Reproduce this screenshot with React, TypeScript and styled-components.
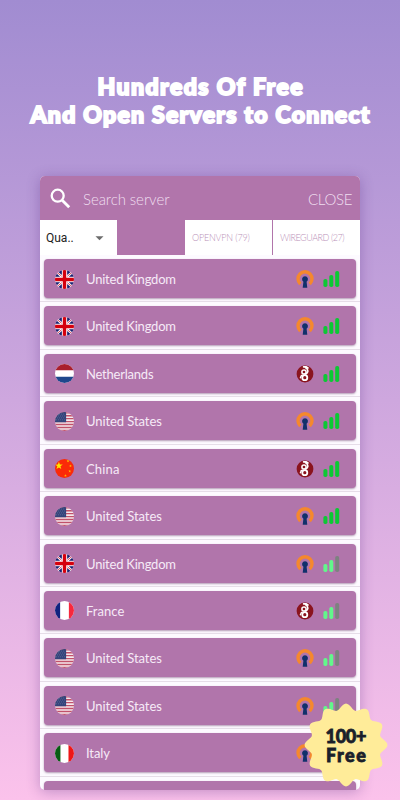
import React from "react";
import styled, { createGlobalStyle } from "styled-components";

const GlobalStyle = createGlobalStyle`
  * { box-sizing: border-box; }
  html, body { margin: 0; padding: 0; }
  body { width: 400px; height: 800px; overflow: hidden; }
  svg { display: block; flex: none; }
`;

const Page = styled.main`
  position: relative;
  width: 400px;
  height: 800px;
  overflow: hidden;
  padding: 72px 40px 0;
  background: linear-gradient(180deg, #a18cd1 0%, #fbc2eb 100%);
  font-family: Lato, sans-serif;
`;

const Heading = styled.h1`
  display: flex;
  flex-direction: column;
  align-items: center;
  height: 104px;
  margin: 0 -40px;
  color: #fff;
  font: 900 23px/28px Lato, sans-serif;
  -webkit-text-stroke: 2px #fff;
  paint-order: stroke fill;
  white-space: nowrap;
`;

const HeadingLine = styled.span<{ $spacing: number }>`
  letter-spacing: ${(p) => p.$spacing}px;
  margin-right: ${(p) => -p.$spacing}px;
`;

const Panel = styled.section`
  height: 614px;
  border-radius: 5px;
  overflow: hidden;
  background: #fdfaff;
  box-shadow: 0 2px 14px rgba(75, 35, 120, 0.32);
`;

const SearchBar = styled.header`
  display: flex;
  align-items: center;
  height: 44px;
  padding: 1px 8px 0 10px;
  background: #b175ab;
  color: #f0dff0;
`;

const Placeholder = styled.span`
  flex: 1;
  margin-left: 12px;
  font: 300 15px/20px Lato, sans-serif;
  letter-spacing: -0.07px;
`;

const Close = styled.span`
  font: 300 15px/20px Lato, sans-serif;
  letter-spacing: -0.35px;
`;

const Tabs = styled.nav`
  display: grid;
  grid-template-columns: 77px 68px 87px 1px 87px;
  height: 35px;
  background: #b175ab;
`;

const SortSelect = styled.div`
  display: flex;
  align-items: center;
  justify-content: space-between;
  padding: 1px 13px 0 6px;
  background: #fff;
  color: #222;
  font: 400 12px/16px Roboto, sans-serif;
`;

const Tab = styled.div<{ $spacing: number }>`
  padding: 10px 0 0 7px;
  background: #fff;
  color: #b98fb7;
  font: 300 9px/16px Lato, sans-serif;
  letter-spacing: ${(p) => p.$spacing}px;
  white-space: nowrap;
`;

const List = styled.div`
  display: flex;
  flex-direction: column;
`;

const Slot = styled.div`
  flex: none;
  height: 47.43px;
  padding: 4px 4px 0;
  border-bottom: 1px solid #e6dde8;
`;

const ServerRow = styled.div`
  display: flex;
  align-items: center;
  height: 39px;
  padding: 1px 16px 0 11px;
  border-radius: 4px;
  background: #b175ab;
  box-shadow: 0 1px 2px rgba(90, 40, 90, 0.45);
`;

const Country = styled.span<{ $spacing: number }>`
  flex: 1;
  margin-left: 12px;
  color: #f6eaf7;
  font: 400 13px/18px Lato, sans-serif;
  letter-spacing: ${(p) => p.$spacing}px;
`;

const SignalBox = styled.span`
  margin-left: 9px;
`;

const BadgeBox = styled.aside`
  position: absolute;
  left: 304px;
  top: 703px;
  width: 84px;
  height: 84px;
  display: grid;
  place-items: center;
`;

const BadgeShape = styled.svg`
  grid-area: 1 / 1;
`;

const BadgeText = styled.div`
  grid-area: 1 / 1;
  position: relative;
  display: flex;
  flex-direction: column;
  align-items: center;
  padding-top: 2px;
  color: #1b1f2a;
  font: 900 18px/19px Lato, sans-serif;
  -webkit-text-stroke: 0.8px #1b1f2a;
`;

const BadgeLine = styled.span<{ $spacing: number }>`
  letter-spacing: ${(p) => p.$spacing}px;
  margin-right: ${(p) => -p.$spacing}px;
`;

type FlagCode = "gb" | "nl" | "us" | "cn" | "fr" | "it";

const STAR = "M0-1 .24-.31 .95-.31 .38.12 .59.81 0 .4-.59.81-.38.12-.95-.31-.24-.31Z";

const flagArt: Record<FlagCode, React.ReactNode> = {
  gb: (
    <>
      <path fill="#fafaff" d="M0 0h20v20H0z" />
      <path fill="#17206f" d="M3 1.6 7.2 5.2V0H3zM17 1.6 12.8 5.2V0H17zM3 18.4l4.2-3.6V20H3zM17 18.4l-4.2-3.6V20H17zM0 3.8v3.4h5.4L1.6 3.8zM20 3.8v3.4h-5.4l3.8-3.4zM0 16.2v-3.4h5.4l-3.8 3.4zM20 16.2v-3.4h-5.4l3.8 3.4z" />
      <path stroke="#d42a3a" strokeWidth=".9" d="M2 2.4 7 6.6M18 2.4 13 6.6M2 17.6 7 13.4M18 17.6 13 13.4" />
      <path fill="#d5000d" d="M8.2 0h3.6v8.2H20v3.6h-8.2V20H8.2v-8.2H0V8.2h8.2z" />
    </>
  ),
  nl: (
    <>
      <path fill="#fff" d="M0 0h20v20H0z" />
      <path fill="#a91f2d" d="M0 0h20v6.6H0z" />
      <path fill="#1e478c" d="M0 13.3h20V20H0z" />
    </>
  ),
  us: (
    <>
      <path fill="#f5e9ee" d="M0 0h20v20H0z" />
      <path stroke="#c1516a" strokeWidth="1.5" d="M0 .8h20M0 3.9h20M0 7h20M0 10.1h20M0 13.2h20M0 16.3h20M0 19.4h20" />
      <path fill="#34447b" d="M0 0h11.7v10.7H0z" />
      <path stroke="#7984a9" strokeWidth=".7" strokeDasharray=".8 1.4" d="M0 2.2h11M1 4.2h10M0 6.2h11M1 8.2h10" />
    </>
  ),
  cn: (
    <>
      <path fill="#fa2a08" d="M0 0h20v20H0z" />
      <path fill="#ffe600" transform="translate(4.1 7.1) scale(4.3)" d={STAR} />
      {[[13.7, 2.2], [16.3, 7.3], [15.5, 12.8], [11, 17.5]].map(([x, y]) => (
        <path key={x} fill="#ffc400" transform={`translate(${x} ${y}) scale(1.6)`} d={STAR} />
      ))}
    </>
  ),
  fr: (
    <>
      <path fill="#fff" d="M0 0h20v20H0z" />
      <path fill="#10237f" d="M0 0h5.4v20H0z" />
      <path fill="#f7283d" d="M14.6 0H20v20h-5.4z" />
    </>
  ),
  it: (
    <>
      <path fill="#fff" d="M0 0h20v20H0z" />
      <path fill="#075c13" d="M0 0h5.7v20H0z" />
      <path fill="#ee1717" d="M14.2 0H20v20h-5.8z" />
    </>
  ),
};

const Flag = ({ code, id }: { code: FlagCode; id: string }) => (
  <svg width="19" height="19" viewBox="0 0 20 20">
    <clipPath id={id}>
      <circle cx="10" cy="10" r="10" />
    </clipPath>
    <g clipPath={`url(#${id})`}>{flagArt[code]}</g>
  </svg>
);

const OpenVpnIcon = () => (
  <svg width="18" height="18" viewBox="0 0 18 18">
    <path d="M4.3 14A7 7 0 1 1 13.7 14" fill="none" stroke="#f5882d" strokeWidth="3.4" />
    <path d="M9 6.2a3 3 0 0 1 1.6 5.5l.7 6.1H6.7l.7-6.1A3 3 0 0 1 9 6.2z" fill="#10306b" />
  </svg>
);

const WireGuardIcon = () => (
  <svg width="18" height="18" viewBox="0 0 18 18">
    <circle cx="9" cy="9" r="8.4" fill="#8a141e" />
    <g fill="none" stroke="#fff" strokeLinecap="round">
      <path strokeWidth="1.6" d="M7.6 1.9h2.6L12 3M9.4 2.6c1.2.9 2.6 1.6 2.5 3.7-.1 1.4-1.2 2.2-2.2 2.7" />
      <circle cx="8" cy="7" r="2.1" strokeWidth="1.5" />
      <circle cx="8.8" cy="12.7" r="2.5" strokeWidth="1.8" />
      <path strokeWidth="1.4" d="M5.4 10.4 4.4 12.8" />
    </g>
  </svg>
);

const Signal = ({ full }: { full: boolean }) => {
  const on = full ? "#0cc934" : "#62f78b";
  return (
    <svg width="17" height="18" viewBox="0 0 17 18">
      <rect x=".4" y="9" width="4" height="8" rx="1.7" fill={on} />
      <rect x="6.3" y="5" width="4" height="12" rx="1.8" fill={on} />
      <rect x="12.2" y="1" width="4" height="16" rx="1.8" fill={full ? on : "#7d8280"} />
    </svg>
  );
};

const badgePath =
  Array.from({ length: 180 }, (_, i) => {
    const a = (i / 180) * Math.PI * 2;
    const r = 38.4 + 3 * Math.cos(12 * a);
    return `${i ? "L" : "M"}${(42 + r * Math.sin(a)).toFixed(2)} ${(42 - r * Math.cos(a)).toFixed(2)}`;
  }).join("") + "Z";

const names: Record<FlagCode, [string, number]> = {
  gb: ["United Kingdom", -0.22],
  nl: ["Netherlands", -0.22],
  us: ["United States", -0.08],
  cn: ["China", 0.15],
  fr: ["France", 0.05],
  it: ["Italy", -0.1],
};

const servers: { code: FlagCode; wire?: boolean; full?: boolean }[] = [
  { code: "gb", full: true },
  { code: "gb", full: true },
  { code: "nl", wire: true, full: true },
  { code: "us", full: true },
  { code: "cn", wire: true, full: true },
  { code: "us", full: true },
  { code: "gb" },
  { code: "fr", wire: true },
  { code: "us" },
  { code: "us" },
  { code: "it" },
];

export default function App() {
  return (
    <>
      <GlobalStyle />
      <Page>
        <Heading>
          <HeadingLine $spacing={1.45}>Hundreds Of Free</HeadingLine>
          <HeadingLine $spacing={1.27}>And Open Servers to Connect</HeadingLine>
        </Heading>
        <Panel>
          <SearchBar>
            <svg width="21" height="21" viewBox="0 0 21 21" fill="none" stroke="#fff">
              <circle cx="7.7" cy="7.7" r="6" strokeWidth="2.3" />
              <path d="m12.2 12.2 7 7" strokeWidth="2.8" />
            </svg>
            <Placeholder>Search server</Placeholder>
            <Close>CLOSE</Close>
          </SearchBar>
          <Tabs>
            <SortSelect>
              Qua..
              <svg width="9" height="5" viewBox="0 0 9 5">
                <path d="M.5.3h8l-4 4z" fill="#6c6c6c" />
              </svg>
            </SortSelect>
            <span />
            <Tab $spacing={-0.18}>OPENVPN (79)</Tab>
            <span />
            <Tab $spacing={-0.48}>WIREGUARD (27)</Tab>
          </Tabs>
          <List>
            {servers.map((s, i) => (
              <Slot key={i}>
                <ServerRow>
                  <Flag code={s.code} id={`flag-${i}`} />
                  <Country $spacing={names[s.code][1]}>{names[s.code][0]}</Country>
                  {s.wire ? <WireGuardIcon /> : <OpenVpnIcon />}
                  <SignalBox>
                    <Signal full={!!s.full} />
                  </SignalBox>
                </ServerRow>
              </Slot>
            ))}
            <Slot>
              <ServerRow />
            </Slot>
          </List>
        </Panel>
        <BadgeBox>
          <BadgeShape width="84" height="84" viewBox="0 0 84 84">
            <path d={badgePath} fill="#ffec99" />
          </BadgeShape>
          <BadgeText>
            <BadgeLine $spacing={-0.3}>100+</BadgeLine>
            <BadgeLine $spacing={1.5}>Free</BadgeLine>
          </BadgeText>
        </BadgeBox>
      </Page>
    </>
  );
}
